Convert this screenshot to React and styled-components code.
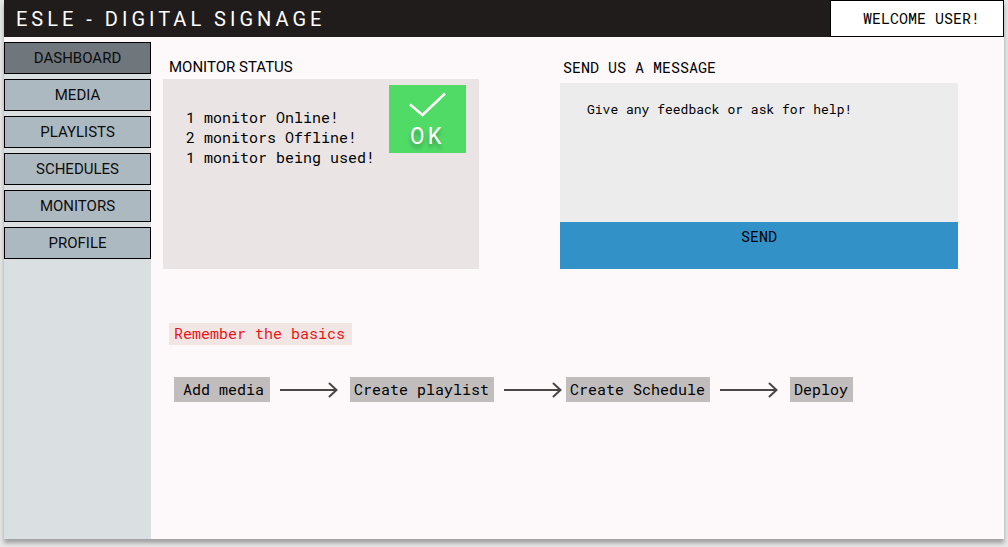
import React from "react";
import styled, { createGlobalStyle } from "styled-components";

const mono = `"Roboto Mono", "Liberation Mono", monospace`;

const GlobalStyle = createGlobalStyle`
  * { box-sizing: border-box; }
  body {
    margin: 0;
    background: #e6e6e6;
    color: #000;
    font: 15px/20px Roboto, sans-serif;
  }
  button, textarea { font: inherit; color: inherit; }
`;

const Shell = styled.div`
  display: flex;
  flex-direction: column;
  min-height: calc(100vh - 8px);
  margin: 0 4px 8px;
  background: #fdf9fa;
  box-shadow: 0 4px 4px rgba(0, 0, 0, 0.3);
`;

const Header = styled.header`
  display: flex;
  justify-content: space-between;
  height: 37px;
  background: #201c1b;
`;

const Brand = styled.h1`
  margin: 0;
  padding-left: 12px;
  color: #fff;
  font-size: 20px;
  font-weight: 400;
  line-height: 38px;
  letter-spacing: 4px;
`;

const Welcome = styled.div`
  padding: 0 23px 0 32px;
  border: 1px solid #000;
  background: #fff;
  font-family: ${mono};
  line-height: 35px;
`;

const Body = styled.div`
  display: flex;
  flex: 1;
`;

const Sidebar = styled.nav`
  display: flex;
  flex-direction: column;
  gap: 5px;
  width: 147px;
  margin-top: 5px;
  background: #dadfe1;
`;

const NavLink = styled.a`
  height: 32px;
  border: 1px solid #000;
  background: ${(p) => (p.$active ? "#6f777d" : "#adb9c1")};
  color: #0c0c0c;
  line-height: 30px;
  text-align: center;
  text-decoration: none;
`;

const Main = styled.main`
  flex: 1;
  padding: 20px 46px 20px 12px;
`;

const Columns = styled.div`
  display: grid;
  grid-template-columns: 316fr 398fr;
  gap: 81px;
`;

const Column = styled.section`
  display: flex;
  flex-direction: column;
  gap: ${(p) => p.$gap};
  min-width: 0;
`;

const Title = styled.h2`
  margin: 0;
  padding-left: ${(p) => (p.$mono ? "3px" : "6px")};
  font-family: ${(p) => (p.$mono ? mono : "inherit")};
  font-size: 15px;
  font-weight: 400;
`;

const StatusPanel = styled.div`
  display: flex;
  justify-content: space-between;
  align-items: flex-start;
  flex: 1;
  padding: 6px 13px 6px 23px;
  background: #eae5e4;
`;

const StatusList = styled.ul`
  margin: 0;
  padding: 22px 0 0;
  list-style: none;
  font-family: ${mono};
  white-space: nowrap;
`;

const OkBadge = styled.div`
  display: flex;
  flex-direction: column;
  align-items: center;
  width: 77px;
  height: 68px;
  padding-top: 6px;
  background: #50db67;
  color: #fff;
  font-family: ${mono};
  font-size: 24px;
  line-height: 36px;
  letter-spacing: 3px;
  text-shadow: 0 4px 4px rgba(0, 0, 0, 0.3);
`;

const MessageForm = styled.form`
  display: flex;
  flex-direction: column;
`;

const MessageBox = styled.textarea`
  height: 139px;
  padding: 16px 27px;
  border: 0;
  background: #ececec;
  font-family: ${mono};
  font-size: 13px;
  resize: none;
  &::placeholder { color: #000; opacity: 1; }
`;

const SendButton = styled.button`
  height: 47px;
  padding: 0 0 20px;
  border: 0;
  background: #3292c8;
  font-family: ${mono};
`;

const Basics = styled.section`
  margin-top: 54px;
  padding-left: 6px;
  font-family: ${mono};
`;

const BasicsTitle = styled.h2`
  width: fit-content;
  margin: 0;
  padding: 0 7px 2px 5px;
  background: #f2e6e5;
  color: #ee1216;
  font-size: 15px;
  font-weight: 400;
  line-height: 20px;
`;

const Steps = styled.ol`
  display: flex;
  flex-wrap: wrap;
  margin: 32px 0 0;
  padding: 0 0 0 5px;
  list-style: none;
`;

const Step = styled.li`
  display: flex;
  align-items: center;
`;

const StepName = styled.span`
  padding: ${(p) => (p.$wide ? "0 6px 0 9px" : "0 5px 0 4px")};
  background: #c1bdbd;
  line-height: 25px;
`;

const ArrowIcon = styled.svg`
  display: block;
  margin: 0 ${(p) => p.$after} 0 10px;
`;

const Arrow = ({ after }) => (
  <ArrowIcon $after={after} width="58" height="16" viewBox="0 0 58 16" fill="none" stroke="#4b4646" strokeWidth="2" aria-hidden="true">
    <path d="M0 8H57" />
    <path d="M49.500 1.500L56.500 8L49.500 14.500" strokeLinecap="round" />
  </ArrowIcon>
);

const pages = ["DASHBOARD", "MEDIA", "PLAYLISTS", "SCHEDULES", "MONITORS", "PROFILE"];

const steps = [
  { name: "Add media", wide: true, after: "12px" },
  { name: "Create playlist", after: "4px" },
  { name: "Create Schedule", after: "12px" },
  { name: "Deploy" },
];

export default function App() {
  return (
    <>
      <GlobalStyle />
      <Shell>
        <Header>
          <Brand>ESLE - DIGITAL SIGNAGE</Brand>
          <Welcome>WELCOME USER!</Welcome>
        </Header>
        <Body>
          <Sidebar>
            {pages.map((page, i) => (
              <NavLink key={page} href={`#${page.toLowerCase()}`} $active={i === 0}>
                {page}
              </NavLink>
            ))}
          </Sidebar>
          <Main>
            <Columns>
              <Column $gap="2px">
                <Title>MONITOR STATUS</Title>
                <StatusPanel>
                  <StatusList>
                    <li>1 monitor Online!</li>
                    <li>2 monitors Offline!</li>
                    <li>1 monitor being used!</li>
                  </StatusList>
                  <OkBadge>
                    <svg width="40" height="26" viewBox="0 0 40 26" fill="none" stroke="#fff" strokeWidth="2.500" aria-hidden="true">
                      <path d="M2 13.500L14.500 24L37 2.500" />
                    </svg>
                    OK
                  </OkBadge>
                </StatusPanel>
              </Column>
              <Column $gap="6px">
                <Title $mono>
                  <label htmlFor="message">SEND US A MESSAGE</label>
                </Title>
                <MessageForm onSubmit={(e) => e.preventDefault()}>
                  <MessageBox id="message" placeholder="Give any feedback or ask for help!" />
                  <SendButton type="submit">SEND</SendButton>
                </MessageForm>
              </Column>
            </Columns>
            <Basics>
              <BasicsTitle>Remember the basics</BasicsTitle>
              <Steps>
                {steps.map((step) => (
                  <Step key={step.name}>
                    <StepName $wide={step.wide}>{step.name}</StepName>
                    {step.after && <Arrow after={step.after} />}
                  </Step>
                ))}
              </Steps>
            </Basics>
          </Main>
        </Body>
      </Shell>
    </>
  );
}
